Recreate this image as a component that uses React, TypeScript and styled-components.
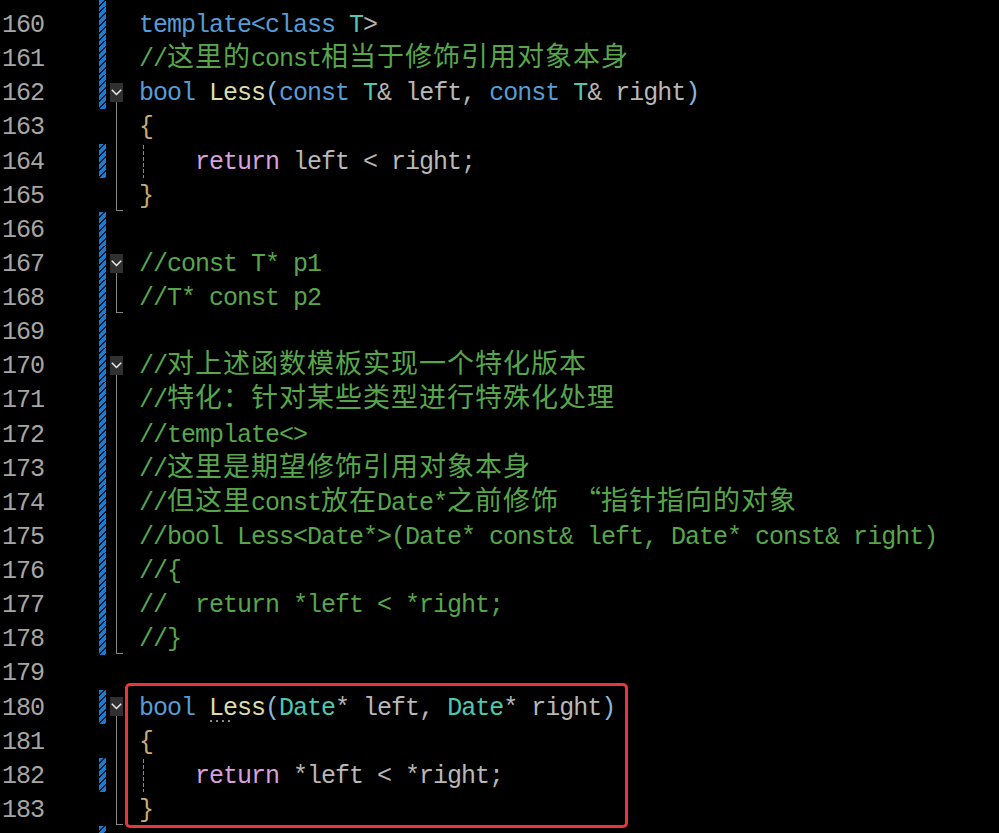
import React from 'react';
import styled, { createGlobalStyle, css } from 'styled-components';

const Global = createGlobalStyle`
  html, body { margin: 0; padding: 0; background: #000; overflow: hidden; }
  #root { width: 999px; height: 833px; }
`;

const LH = 34.13;

const Viewport = styled.div`
  width: 999px;
  height: 833px;
  overflow: hidden;
  background: #000;
  font-family: "Liberation Mono", "DejaVu Sans Mono", monospace;
  font-size: 25px;
  letter-spacing: -1px;
`;

const Lines = styled.div`
  margin-top: -27.13px;
  display: flex;
  flex-direction: column;
`;

const Row = styled.div`
  display: grid;
  grid-template-columns: 44px 55px 7px 4px 13px 16px 1fr;
  grid-template-rows: ${LH}px;
  height: ${LH}px;
`;

const Num = styled.div`
  grid-column: 1;
  text-align: right;
  color: #a8a6a2;
  line-height: 38px;
  white-space: pre;
`;

const Bar = styled.div<{ $on: boolean }>`
  grid-column: 3;
  ${(p) =>
    p.$on &&
    css`
      background: repeating-linear-gradient(135deg, #1a7bd2 0 3.2px, #041a30 3.2px 4.9px);
    `}
`;

const Fold = styled.div`
  grid-column: 5;
  display: flex;
  flex-direction: column;
  align-items: flex-start;
`;

const FoldBox = styled.svg`
  display: block;
  flex: none;
  margin-top: 7.7px;
`;

const FoldStem = styled.div`
  flex: 1;
  width: 1px;
  margin-left: 6px;
  background: #858585;
`;

const FoldEnd = styled.div`
  height: 33px;
  width: 7px;
  margin-left: 6px;
  box-sizing: border-box;
  border-left: 1px solid #858585;
  border-bottom: 1px solid #858585;
`;

const Code = styled.div`
  grid-column: 7;
  line-height: 38px;
  white-space: pre;
  color: #dcdcdc;
`;

const colors: Record<string, string> = {
  kw: '#569cd6',
  ty: '#4ec9b0',
  fn: '#dcdcaa',
  pm: '#b8b8b8',
  op: '#b4b4b4',
  cm: '#57a64a',
  rt: '#d8a0df',
  br: '#c9ab74',
  pr: '#8cb6dc',
  tx: '#dcdcdc',
};

const Tok = styled.span<{ $k: string }>`
  color: ${(p) => colors[p.$k]};
`;

const Wide = styled.span`
  font-family: "Noto Sans CJK SC", sans-serif;
  font-size: 27px;
  letter-spacing: 1px;
  line-height: 1;
`;

const Quote = styled.span`
  display: inline-block;
  width: 28px;
  text-align: right;
  font-family: "Noto Sans CJK SC", sans-serif;
  font-size: 27px;
  letter-spacing: 0;
  line-height: 1;
`;

const Indent = styled.span`
  display: inline-block;
  width: 56px;
  height: 34px;
  vertical-align: top;
  background: repeating-linear-gradient(to bottom, #8a8a8a 0 4px, transparent 4px 6px) 4px 1px / 1px 33px no-repeat;
`;

const Hint = styled.span`
  position: relative;
  &::after {
    content: "";
    position: absolute;
    left: 1px;
    bottom: 1px;
    width: 22px;
    height: 2px;
    background: linear-gradient(to right, #8a8a8a 0 2px, transparent 2px) 0 0 / 6px 2px repeat-x;
  }
`;

const Focus = styled.div`
  position: relative;
  display: flex;
  flex-direction: column;
  &::after {
    content: "";
    position: absolute;
    left: 125px;
    top: -6.6px;
    width: 503px;
    height: 145px;
    box-sizing: border-box;
    border: 3px solid #e8373c;
    border-radius: 5px;
    pointer-events: none;
  }
`;

type T = [string, string];
type FoldKind = 'start' | 'mid' | 'end' | undefined;
type Line = { n: number; bar?: boolean; fold?: FoldKind; indent?: boolean; toks: T[] };

const WIDE_RE = /([\u3000-\u303f\u4e00-\u9fff\uff00-\uffef]+|\u201c)/;

function renderText(text: string) {
  return text.split(WIDE_RE).map((part, i) => {
    if (!part) return null;
    if (part === '\u201c') return <Quote key={i}>{part}</Quote>;
    if (WIDE_RE.test(part)) return <Wide key={i}>{part}</Wide>;
    return <React.Fragment key={i}>{part}</React.Fragment>;
  });
}

const lines: Line[] = [
  { n: 159, bar: true, toks: [] },
  { n: 160, bar: true, toks: [['kw', 'template<class'], ['tx', ' '], ['ty', 'T'], ['op', '>']] },
  { n: 161, bar: true, toks: [['cm', '//这里的const相当于修饰引用对象本身']] },
  {
    n: 162,
    bar: true,
    fold: 'start',
    toks: [
      ['kw', 'bool'], ['tx', ' '], ['fn', 'Less'], ['pr', '('], ['kw', 'const'], ['tx', ' '], ['ty', 'T'], ['op', '&'],
      ['pm', ' left'], ['op', ','], ['tx', ' '], ['kw', 'const'], ['tx', ' '], ['ty', 'T'], ['op', '&'], ['pm', ' right'], ['pr', ')'],
    ],
  },
  { n: 163, fold: 'mid', toks: [['br', '{']] },
  {
    n: 164,
    bar: true,
    fold: 'mid',
    indent: true,
    toks: [['rt', 'return'], ['pm', ' left'], ['op', ' < '], ['pm', 'right'], ['op', ';']],
  },
  { n: 165, fold: 'end', toks: [['br', '}']] },
  { n: 166, bar: true, toks: [] },
  { n: 167, bar: true, fold: 'start', toks: [['cm', '//const T* p1']] },
  { n: 168, bar: true, fold: 'end', toks: [['cm', '//T* const p2']] },
  { n: 169, bar: true, toks: [] },
  { n: 170, bar: true, fold: 'start', toks: [['cm', '//对上述函数模板实现一个特化版本']] },
  { n: 171, bar: true, fold: 'mid', toks: [['cm', '//特化：针对某些类型进行特殊化处理']] },
  { n: 172, bar: true, fold: 'mid', toks: [['cm', '//template<>']] },
  { n: 173, bar: true, fold: 'mid', toks: [['cm', '//这里是期望修饰引用对象本身']] },
  { n: 174, bar: true, fold: 'mid', toks: [['cm', '//但这里const放在Date*之前修饰 \u201c指针指向的对象']] },
  { n: 175, bar: true, fold: 'mid', toks: [['cm', '//bool Less<Date*>(Date* const& left, Date* const& right)']] },
  { n: 176, bar: true, fold: 'mid', toks: [['cm', '//{']] },
  { n: 177, bar: true, fold: 'mid', toks: [['cm', '//  return *left < *right;']] },
  { n: 178, bar: true, fold: 'end', toks: [['cm', '//}']] },
  { n: 179, toks: [] },
];

const focusLines: Line[] = [
  {
    n: 180,
    bar: true,
    fold: 'start',
    toks: [
      ['kw', 'bool'], ['tx', ' '], ['hint', 'Le'], ['fn', 'ss'], ['pr', '('], ['ty', 'Date'], ['op', '*'], ['pm', ' left'],
      ['op', ','], ['tx', ' '], ['ty', 'Date'], ['op', '*'], ['pm', ' right'], ['pr', ')'],
    ],
  },
  { n: 181, fold: 'mid', toks: [['br', '{']] },
  {
    n: 182,
    bar: true,
    fold: 'mid',
    indent: true,
    toks: [['rt', 'return'], ['op', ' *'], ['pm', 'left'], ['op', ' < *'], ['pm', 'right'], ['op', ';']],
  },
  { n: 183, fold: 'end', toks: [['br', '}']] },
];

const tailLines: Line[] = [{ n: 184, bar: true, toks: [] }];

function FoldMark({ kind }: { kind: FoldKind }) {
  if (kind === 'start')
    return (
      <Fold>
        <FoldBox width="13" height="19" viewBox="0 0 13 19">
          <rect x="0" y="0" width="13" height="19" fill="#303030" />
          <polyline points="1.8,6.8 6.5,11.5 11.2,6.8" fill="none" stroke="#ececec" strokeWidth="1.5" />
        </FoldBox>
        <FoldStem />
      </Fold>
    );
  if (kind === 'mid')
    return (
      <Fold>
        <FoldStem />
      </Fold>
    );
  if (kind === 'end')
    return (
      <Fold>
        <FoldEnd />
      </Fold>
    );
  return <Fold />;
}

function CodeLine({ line }: { line: Line }) {
  return (
    <Row>
      <Num>{line.n}</Num>
      <Bar $on={!!line.bar} />
      <FoldMark kind={line.fold} />
      <Code>
        {line.indent && <Indent />}
        {line.toks.map(([k, t], i) =>
          k === 'hint' ? (
            <Hint key={i}>
              <Tok $k="fn">{t}</Tok>
            </Hint>
          ) : (
            <Tok key={i} $k={k}>
              {renderText(t)}
            </Tok>
          )
        )}
      </Code>
    </Row>
  );
}

export default function App() {
  return (
    <>
      <Global />
      <Viewport>
        <Lines>
          {lines.map((l) => (
            <CodeLine key={l.n} line={l} />
          ))}
          <Focus>
            {focusLines.map((l) => (
              <CodeLine key={l.n} line={l} />
            ))}
          </Focus>
          {tailLines.map((l) => (
            <CodeLine key={l.n} line={l} />
          ))}
        </Lines>
      </Viewport>
    </>
  );
}
